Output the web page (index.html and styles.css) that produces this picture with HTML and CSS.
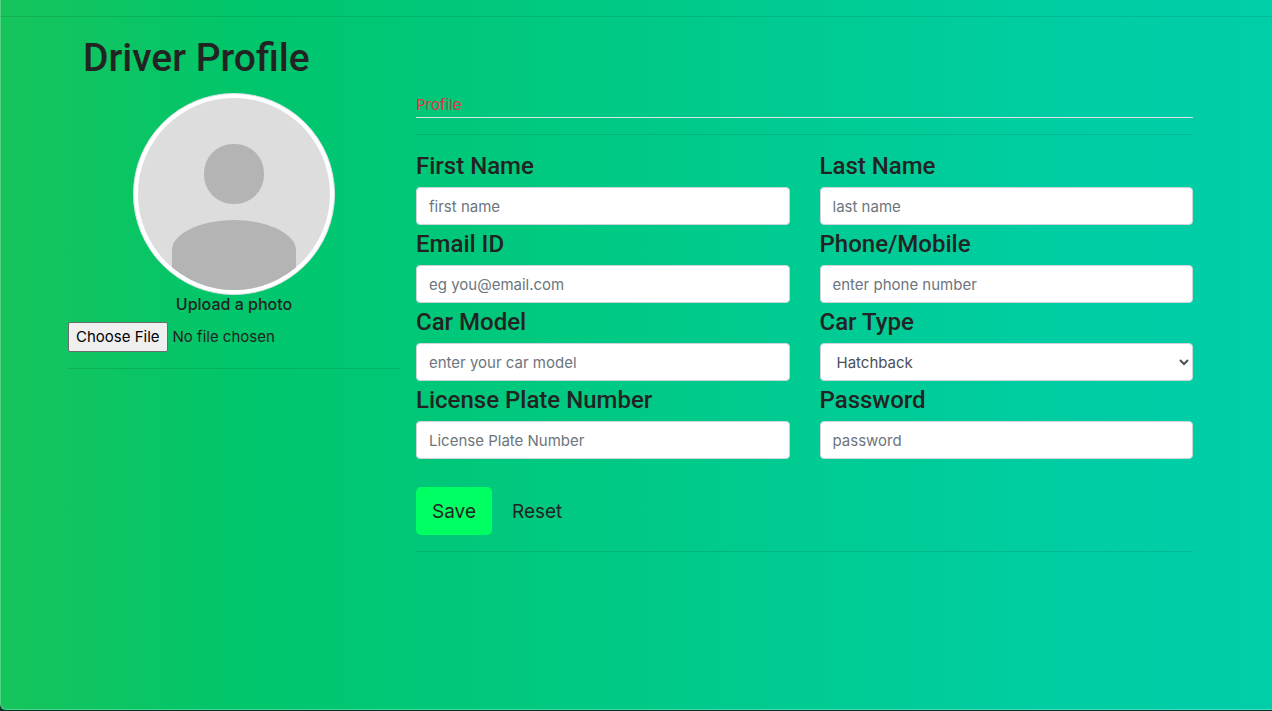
FILE: index.html
```
<!DOCTYPE html>
<html lang="en">
<head>
<meta charset="utf-8">
<meta name="viewport" content="width=device-width, initial-scale=1">
<title>Driver Profile</title>
<link rel="stylesheet" href="styles.css">
</head>
<body>
<div class="page">
  <hr class="rule rule-top">
  <main class="container">
    <h1 class="title">Driver Profile</h1>
    <div class="layout">
      <section class="photo">
        <svg class="avatar" viewBox="0 0 192 192" role="img" aria-label="avatar">
          <rect width="192" height="192" fill="#ddd"/>
          <rect x="66" y="46" width="60" height="60" rx="29" fill="#b4b4b4"/>
          <path d="M34 192V152C34 136 62 122 96 122S158 136 158 152V192Z" fill="#b4b4b4"/>
        </svg>
        <label class="photo-label" for="photo">Upload a photo</label>
        <input class="file" type="file" id="photo">
        <hr class="rule">
      </section>
      <section class="details">
        <nav class="tabs"><a class="tab" href="#profile">Profile</a></nav>
        <hr class="rule">
        <form class="form" id="profile">
          <div class="fields">
            <div class="field"><label for="first">First Name</label><input class="control" id="first" type="text" placeholder="first name"></div>
            <div class="field"><label for="last">Last Name</label><input class="control" id="last" type="text" placeholder="last name"></div>
            <div class="field"><label for="email">Email ID</label><input class="control" id="email" type="email" placeholder="eg you@email.com"></div>
            <div class="field"><label for="phone">Phone/Mobile</label><input class="control" id="phone" type="text" placeholder="enter phone number"></div>
            <div class="field"><label for="model">Car Model</label><input class="control" id="model" type="text" placeholder="enter your car model"></div>
            <div class="field"><label for="type">Car Type</label><select class="control" id="type"><option>Hatchback</option></select></div>
            <div class="field"><label for="plate">License Plate Number</label><input class="control" id="plate" type="text" placeholder="License Plate Number"></div>
            <div class="field"><label for="password">Password</label><input class="control" id="password" type="password" placeholder="password"></div>
          </div>
          <div class="actions">
            <button class="btn btn-save" type="submit">Save</button>
            <button class="btn" type="reset">Reset</button>
          </div>
        </form>
        <hr class="rule">
      </section>
    </div>
  </main>
</div>
</body>
</html>
```
FILE: styles.css
```
*, *::before, *::after { box-sizing: border-box; }

html { background: #06302c; }

body {
  margin: 0;
  padding-bottom: 1px;
  font-family: Inter, "Liberation Sans", sans-serif;
  font-size: 15px;
  line-height: 24px;
  color: #212422;
}

.page {
  min-height: calc(100vh - 1px);
  padding-top: 16px;
  border-left: 1px solid rgba(255, 255, 255, 0.25);
  border-bottom: 1px solid rgba(255, 255, 255, 0.25);
  border-bottom-left-radius: 6px;
  background: linear-gradient(90deg, #16c45b 0%, #00c66c 20%, #00c982 45%, #00cda2 82%, #00cea8 100%) border-box;
}

.rule {
  width: 100%;
  margin: 16px 0;
  border: 0;
  border-top: 1px solid rgba(0, 0, 0, 0.1);
}

.rule-top { margin: 0 0 17px; }

.container { padding: 0 79px 0 67px; }

.title {
  margin: 0 0 11px;
  padding-left: 15px;
  font-family: Roboto, Inter, sans-serif;
  font-size: 39px;
  font-weight: 500;
  line-height: 48px;
}

.layout {
  display: grid;
  grid-template-columns: 332px minmax(0, 1fr);
  gap: 16px;
}

.photo {
  display: flex;
  flex-direction: column;
  align-items: center;
}

.avatar {
  width: 202px;
  height: 202px;
  padding: 4px;
  border: 1px solid #dee2e6;
  border-radius: 50%;
  background: #fff;
  overflow: hidden;
}

.photo-label {
  margin-bottom: 8px;
  font-size: 16px;
  font-weight: 500;
  line-height: 19px;
}

.file {
  width: 100%;
  font: inherit;
}

.file::file-selector-button {
  height: 30px;
  margin: 0 5px 0 0;
  padding: 1px 7px;
  border: 1px solid #6b6b6b;
  border-radius: 2px;
  background: #efefef;
  color: #000;
  font: inherit;
}

.tabs {
  display: flex;
  border-bottom: 1px solid #dee2e6;
}

.tab {
  color: #dc3545;
  text-decoration: none;
}

.fields {
  display: grid;
  grid-template-columns: 1fr 1fr;
  gap: 4px 30px;
}

.field label {
  display: block;
  padding-top: 1px;
  margin-bottom: 7px;
  font-family: Roboto, Inter, sans-serif;
  font-size: 24px;
  font-weight: 500;
  line-height: 28px;
}

.control {
  display: block;
  width: 100%;
  height: 38px;
  padding: 6px 12px;
  border: 1px solid #ced4da;
  border-radius: 4px;
  background-color: #fff;
  color: #495057;
  font: inherit;
}

.control::placeholder { color: #6c757d; opacity: 1; }

.actions {
  display: flex;
  gap: 4px;
  margin-top: 28px;
}

.btn {
  height: 48px;
  padding: 9px 16px 7px;
  border: 0;
  border-radius: 5px;
  background: transparent;
  color: #212422;
  font-family: inherit;
  font-size: 19px;
  line-height: 32px;
}

.btn-save { background: #00ff62; }
```
